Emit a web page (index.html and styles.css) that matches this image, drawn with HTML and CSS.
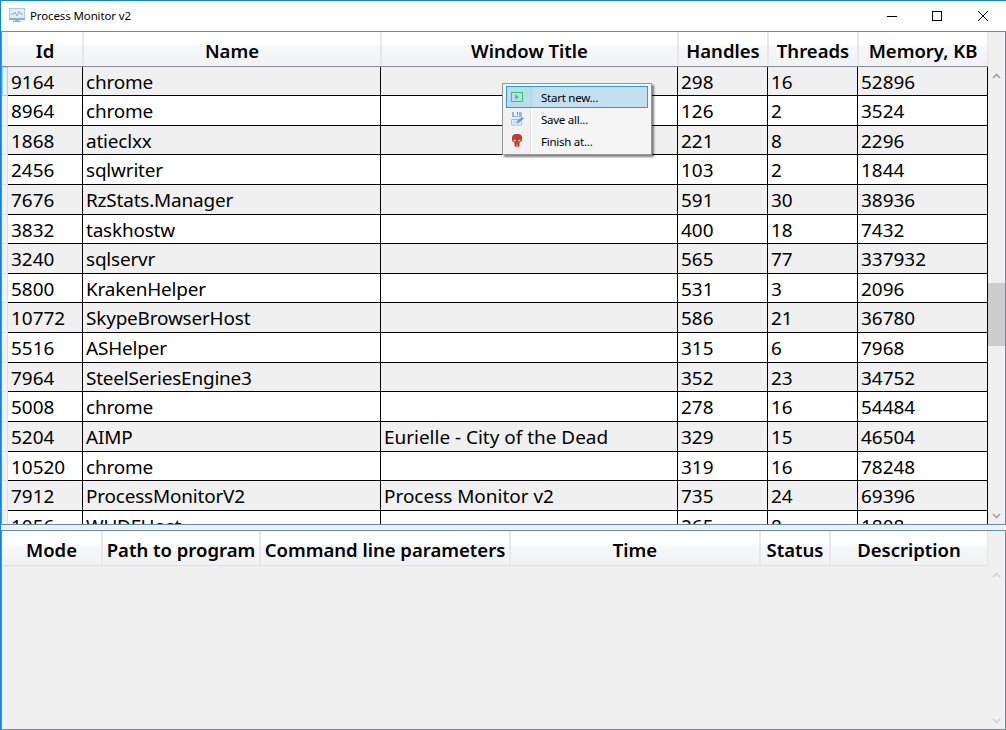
FILE: index.html
```
<!DOCTYPE html>
<html lang="en">
<head>
<meta charset="utf-8">
<title>Process Monitor v2</title>
<link rel="stylesheet" href="styles.css">
</head>
<body>
<div class="window">
  <header class="titlebar">
    <svg class="app-icon" width="18" height="16" viewBox="0 0 18 16"><rect x=".5" y=".5" width="15" height="10" fill="#e3eefa" stroke="#a9c8ea"/><path d="M2 6h3l1-2 2 4 2-5 1.500 3H14" fill="none" stroke="#8aa5c2" stroke-width=".9"/><path d="M0 10h16v2H0zM6 12h4v1h2v1H4v-1h2z" fill="#80b2e4"/></svg>
    <span class="caption">Process Monitor v2</span>
    <svg class="controls" width="102" height="12" viewBox="0 0 102 12" shape-rendering="crispEdges"><path d="M0 6.500h10M45.500 1.500h9v9h-9z" fill="none" stroke="#000"/><path d="M91 1l10 10M101 1l-10 10" stroke="#000" shape-rendering="auto"/></svg>
  </header>
  <section class="grid processes">
    <div class="table">
      <div class="head process-cols"><i></i><b>Id</b><b>Name</b><b>Window Title</b><b>Handles</b><b>Threads</b><b>Memory, KB</b></div>
      <div class="rows" id="rows"></div>
    </div>
    <div class="scroll">
      <svg class="up" width="9" height="6" viewBox="0 0 9 6"><path d="M1 5l3.500-3.500L8 5"/></svg>
      <div class="thumb"></div>
      <svg class="down" width="9" height="6" viewBox="0 0 9 6"><path d="M1 1l3.500 3.500L8 1"/></svg>
    </div>
  </section>
  <section class="grid schedule">
    <div class="table">
      <div class="head schedule-cols"><b>Mode</b><b>Path to program</b><b>Command line parameters</b><b>Time</b><b>Status</b><b>Description</b></div>
    </div>
    <div class="scroll disabled">
      <svg class="up" width="9" height="6" viewBox="0 0 9 6"><path d="M1 5l3.500-3.500L8 5"/></svg>
      <svg class="down" width="9" height="6" viewBox="0 0 9 6"><path d="M1 1l3.500 3.500L8 1"/></svg>
    </div>
  </section>
  <div class="menu">
    <div class="item active">
      <svg width="14" height="14" viewBox="0 0 14 14"><rect x="1.500" y="2.500" width="11" height="9" fill="none" stroke="#2ecc71"/><path d="M5 4.500v5L9.500 7z" fill="#3fc983"/></svg><span>Start new...</span></div>
    <div class="item">
      <svg width="14" height="14" viewBox="0 0 14 14"><path d="M2 0h9l1 1v5l-2 3v4H1V9h1z" fill="#e3eefa"/><path d="M2 0h2v4h5V0h2l1 1v4H2z" fill="#8ab8e8"/><path d="M4 0h5v3H4z" fill="#edf5fc"/><path d="M7 0h1v3H7z" fill="#4f8ac9"/><path d="M1.500 7.500H9M1.500 7.500v5.500h10V9.500M3 10h3" fill="none" stroke="#9cc2ea"/><path d="M6 11.500l1.500-3L12 5l2 1.500-4.500 4z" fill="#65a0de"/></svg><span>Save all...</span></div>
    <div class="item">
      <svg width="14" height="14" viewBox="0 0 14 14"><path d="M2 3l1-2 2-1h4l2 1 1 2v4l-2 1-.5 1v3l-1 1h-3l-1-1V9L4 8 2 7z" fill="#c0392b"/><path d="M3.500 5.500l2.500.8-.5 1h-1.600zM10.500 5.500L8 6.300l.5 1h1.600zM6.700 8h.6v1h-.6zM6 10.500h.5V13H6zM7.500 10.500H8V13h-.5z" fill="#f3d6d2"/></svg><span>Finish at...</span></div>
  </div>
</div>
<script src="app.js"></script>
</body>
</html>
```
FILE: styles.css
```
* { box-sizing: border-box; }
body { margin: 0; font-family: "Noto Sans", "Open Sans", sans-serif; color: #000; }
.window {
  position: relative; width: 1006px; height: 730px; background: #f0f0f0;
  border-top: 1px solid #1883d7; border-left: 1px solid #1883d7;
  display: flex; flex-direction: column; overflow: hidden;
}
.titlebar { height: 30px; flex: none; background: #fff; display: flex; align-items: center; padding: 0 17px 1px 8px; }
.controls { margin-top: 1px; }
.caption { font-size: 11.500px; letter-spacing: -.12px; margin-left: 3px; flex: 1; }
.grid { display: flex; border: 1px solid #688caf; background: #f0f0f0; overflow: hidden; flex: none; }
.processes { height: 494px; }
.schedule { height: 200px; margin-top: 5px; }
.table { width: 986px; flex: none; overflow: hidden; }
.head { display: grid; grid-template-rows: 100%; height: 35px; border-bottom: 1px solid #888b90; background: linear-gradient(#fff 0 13px, #f7f8fa 14px, #f1f2f5 34px); }
.head i { background: #f0f0f0; }
.head b { font-weight: 600; font-size: 18.500px; line-height: 38px; text-align: center; white-space: nowrap; border-right: 2px solid #e6e8ea; }
.head b:last-child { border-right: 1px solid #e4e6e8; }
.schedule .head { border-bottom-color: #dfe1e3; }
.head.process-cols { grid-template-columns: 6px 76px 298px 297px 90px 90px 129px; }
.process-cols { grid-template-columns: 6px 75px 298px 297px 90px 90px 130px; }
.schedule-cols { grid-template-columns: 101px 158px 250px 250px 70px 157px; }
.row { display: grid; grid-template-rows: 100%; height: 29.640px; font-size: 18.960px; line-height: 31px; background: #fff; }
.row:first-child { height: 29px; line-height: 30px; }
.row:nth-child(odd) { background: #f0f0f0; }
.row span { border-right: 1px solid #000; border-bottom: 1px solid #000; padding-left: 3px; white-space: nowrap; }
.row span:nth-of-type(2) { letter-spacing: -.18px; }
.row i { background: #f0f0f0; border-bottom: 1px solid #dfe1e3; border-right: 1px solid #dfe1e3; }
.row:first-child i { background: #e2f3fb; border: 1px solid #9bd6ef; }
.scroll { width: 17px; display: flex; flex-direction: column; align-items: center; padding: 41px 0 5px; background: #f0f0f0; }
.scroll svg { fill: none; stroke: #a0a0a0; stroke-width: 1.600; flex: none; }
.scroll.disabled svg { stroke: #d2d2d2; }
.thumb { width: 17px; height: 63px; margin-top: 204px; background: #cdcdcd; flex: none; }
.down { margin-top: auto; }
.menu { position: absolute; left: 501px; top: 82px; width: 150px; height: 72px; padding: 2px 3px; border: 1px solid #979797; background: linear-gradient(90deg, #f1f1f1 27px, #e2e3e3 27px 28px, #fff 28px 29px, #f5f5f5 29px); box-shadow: 2px 2px 2px rgba(0,0,0,.5); }
.item { height: 22px; display: flex; align-items: center; gap: 17px; padding-left: 3px; border: 1px solid transparent; font-size: 11.500px; letter-spacing: -.25px; }
.item.active { border-color: #26a0da; background: linear-gradient(90deg, #bddcea 24px, #b3d3e1 24px 25px, #c4dfed 25px); }
```
FILE: app.js
```
const processes = [
  [9164, "chrome", "", 298, 16, 52896],
  [8964, "chrome", "", 126, 2, 3524],
  [1868, "atieclxx", "", 221, 8, 2296],
  [2456, "sqlwriter", "", 103, 2, 1844],
  [7676, "RzStats.Manager", "", 591, 30, 38936],
  [3832, "taskhostw", "", 400, 18, 7432],
  [3240, "sqlservr", "", 565, 77, 337932],
  [5800, "KrakenHelper", "", 531, 3, 2096],
  [10772, "SkypeBrowserHost", "", 586, 21, 36780],
  [5516, "ASHelper", "", 315, 6, 7968],
  [7964, "SteelSeriesEngine3", "", 352, 23, 34752],
  [5008, "chrome", "", 278, 16, 54484],
  [5204, "AIMP", "Eurielle - City of the Dead", 329, 15, 46504],
  [10520, "chrome", "", 319, 16, 78248],
  [7912, "ProcessMonitorV2", "Process Monitor v2", 735, 24, 69396],
  [1056, "WUDFHost", "", 265, 8, 1808]
];
document.getElementById("rows").innerHTML = processes.map(p =>
  `<div class="row process-cols"><i></i>${p.map(v => `<span>${v}</span>`).join("")}</div>`).join("");
```
